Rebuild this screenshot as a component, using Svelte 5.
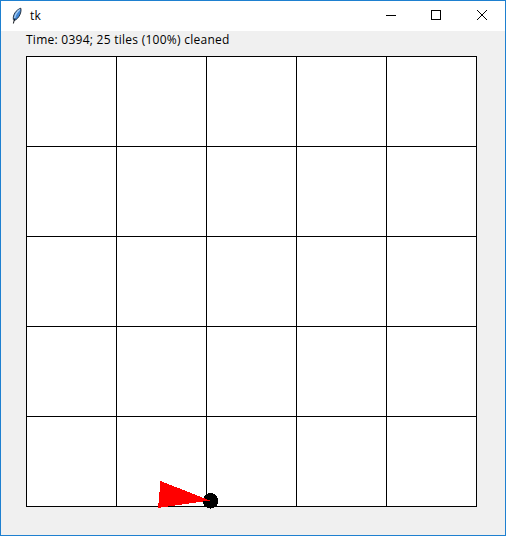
<script>
  const cells = Array.from({ length: 25 }, (_, i) => i);
  const time = '0394';
  const cleaned = 25;
  const percent = 100;
</script>

<div class="window">
  <header>
    <svg class="feather" width="12" height="18" viewBox="0 0 12 18">
      <path d="M2.4 12.5C1.6 8 5 2.8 9.8 1.2C10.8 4.5 8.5 11.5 3.2 13.6Z" fill="#3f86d6" stroke="#1d2733" stroke-width="0.9" />
      <path d="M8.8 2.5C6.2 4.5 4.3 7.5 3.6 11" fill="none" stroke="#a9cdf0" stroke-width="1.4" />
      <path d="M4 11.5C3.2 13 2.8 14.5 2.4 16.5" fill="none" stroke="#10151c" stroke-width="1" />
    </svg>
    <span class="title">tk</span>
    <div class="controls">
      <svg width="45" height="29" shape-rendering="crispEdges"><path d="M15 14.5H25" stroke="#000" /></svg>
      <svg width="45" height="29" shape-rendering="crispEdges"><rect x="15.5" y="9.5" width="9" height="9" fill="none" stroke="#000" /></svg>
      <svg width="45" height="29"><path d="M16 9L26 19M26 9L16 19" stroke="#000" /></svg>
    </div>
  </header>
  <main>
    <p class="status">Time: {time}; {cleaned} tiles ({percent}%) cleaned</p>
    <div class="room">
      {#each cells as cell (cell)}
        <div class="tile"></div>
      {/each}
      <svg class="robot" width="64" height="34" viewBox="0 0 64 34" shape-rendering="crispEdges">
        <circle cx="54.5" cy="23.9" r="7.8" fill="#000" />
        <polygon points="4.5,4 2,31 54,23.5" fill="#f00" />
      </svg>
    </div>
  </main>
</div>

<style>
  .window {
    box-sizing: border-box;
    width: 506px;
    height: 536px;
    border: 1px solid #1e80d0;
    background: #f0f0f0;
    color: #000;
    font-family: 'Open Sans', 'Noto Sans', sans-serif;
    font-size: 12px;
    letter-spacing: 0.26px;
    overflow: hidden;
  }
  header {
    display: flex;
    align-items: center;
    height: 30px;
    background: #fff;
  }
  .feather {
    margin-left: 10px;
  }
  .title {
    margin-left: 7px;
    padding-bottom: 1px;
  }
  .controls {
    display: flex;
    align-self: flex-start;
    margin-left: auto;
    margin-right: -1px;
  }
  main {
    padding-left: 25px;
  }
  .status {
    margin: 0;
    height: 25px;
    line-height: 18px;
    white-space: pre;
  }
  .room {
    position: relative;
    display: grid;
    grid-template-columns: repeat(5, 90px);
    grid-auto-rows: 90px;
    width: 450px;
    border-top: 1px solid #000;
    border-left: 1px solid #000;
    background: #fff;
  }
  .tile {
    border-right: 1px solid #000;
    border-bottom: 1px solid #000;
  }
  .robot {
    position: absolute;
    left: 129px;
    top: 420px;
  }
</style>
